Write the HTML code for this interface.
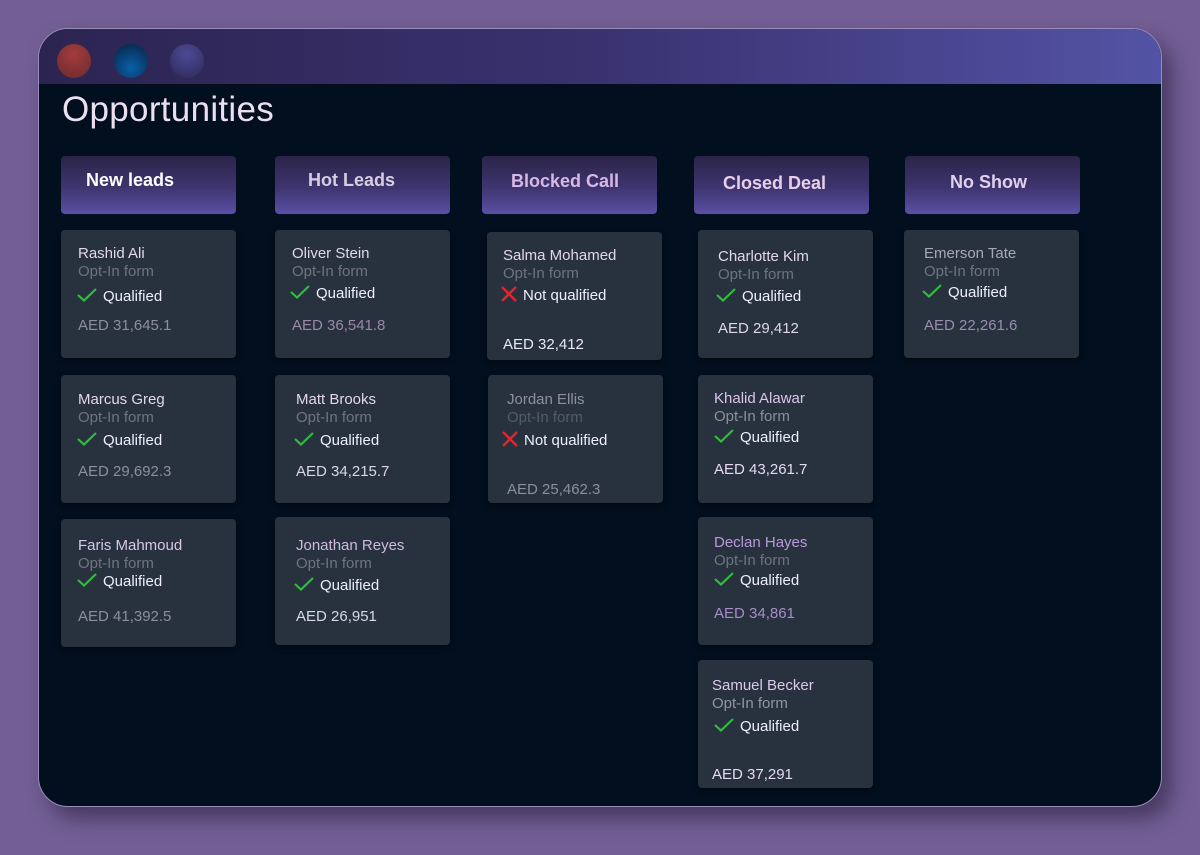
<!DOCTYPE html>
<html><head><style>
*{margin:0;padding:0;box-sizing:border-box}
body{width:1200px;height:855px;background:#735f95;font-family:"Liberation Sans",sans-serif;position:relative;overflow:hidden}
.win{position:absolute;left:38px;top:28px;width:1124px;height:779px;border-radius:30px;background:#020f1e;overflow:hidden;border:1px solid #9a8cb8;box-shadow:10px 12px 20px rgba(30,20,50,.5)}
.bar{position:absolute;left:0;top:0;width:100%;height:55px;background:linear-gradient(90deg,#2c2450,#3a3270 50%,#5353a5)}
.dot{position:absolute;top:15px;width:34px;height:34px;border-radius:50%}
h1{position:absolute;left:62px;top:90px;font-weight:400;font-size:35px;color:#ecdff0;letter-spacing:.3px}
.hd{position:absolute;top:156px;width:175px;height:58px;border-radius:4px;background:linear-gradient(180deg,#2b2448 0%,#3e3570 55%,#5b4fa5 100%);color:#e6cfe8;font-weight:700;font-size:18px}
.hd span{position:absolute;top:14px}
.c{position:absolute;width:175px;height:128px;border-radius:4px;background:#28323f;box-shadow:0 2px 6px rgba(0,0,0,.5);font-size:15px}
.c div{position:absolute;white-space:nowrap}
.n{color:#e2d6ea}.f{color:#6e7380}.q{color:#eef}.a{color:#8c8f99}
.ck{display:inline-block;width:20px;height:14px;vertical-align:-1px;margin-right:6px}
</style></head><body>
<div class="win">
<div class="bar"></div>
<div class="dot" style="left:18px;background:radial-gradient(circle at 50% 30%,#a33c3c,#6a2a30)"></div>
<div class="dot" style="left:75px;background:radial-gradient(circle at 50% 70%,#0a5fa8,#06213f)"></div>
<div class="dot" style="left:131px;background:radial-gradient(circle at 50% 30%,#4e4a98,#2b2955)"></div>
</div>
<h1>Opportunities</h1>
<div class="hd" style="left:61px"><span style="left:25px;color:#fff">New leads</span></div>
<div class="hd" style="left:275px"><span style="left:33px;color:#d9cde0">Hot Leads</span></div>
<div class="hd" style="left:482px"><span style="left:29px;top:15px;color:#d9b8e4">Blocked Call</span></div>
<div class="hd" style="left:694px"><span style="left:29px;top:17px;color:#e8cfe8">Closed Deal</span></div>
<div class="hd" style="left:905px"><span style="left:45px;top:16px;color:#e0d0ec">No Show</span></div>

<svg width="0" height="0" style="position:absolute"><defs>
<symbol id="ok" viewBox="0 0 20 14"><path d="M1 7 L7 12.5 L19 1" fill="none" stroke="#2fbd3a" stroke-width="2.2"/></symbol>
<symbol id="no" viewBox="0 0 16 16"><path d="M1 1L15 15M15 1L1 15" fill="none" stroke="#e0262d" stroke-width="2.4"/></symbol>
</defs></svg>

<!-- col1 -->
<div class="c" style="left:61px;top:230px"><div class="n" style="left:17px;top:15px">Rashid Ali</div><div class="f" style="left:17px;top:33px">Opt-In form</div><div class="q" style="left:16px;top:58px"><svg class="ck"><use href="#ok"/></svg>Qualified</div><div class="a" style="left:17px;top:87px">AED 31,645.1</div></div>
<div class="c" style="left:61px;top:375px"><div class="n" style="left:17px;top:16px">Marcus Greg</div><div class="f" style="left:17px;top:34px">Opt-In form</div><div class="q" style="left:16px;top:57px"><svg class="ck"><use href="#ok"/></svg>Qualified</div><div class="a" style="left:17px;top:88px">AED 29,692.3</div></div>
<div class="c" style="left:61px;top:519px"><div class="n" style="left:17px;top:18px;color:#d9c7e6">Faris Mahmoud</div><div class="f" style="left:17px;top:36px">Opt-In form</div><div class="q" style="left:16px;top:54px"><svg class="ck"><use href="#ok"/></svg>Qualified</div><div class="a" style="left:17px;top:89px">AED 41,392.5</div></div>
<!-- col2 -->
<div class="c" style="left:275px;top:230px"><div class="n" style="left:17px;top:15px">Oliver Stein</div><div class="f" style="left:17px;top:33px">Opt-In form</div><div class="q" style="left:15px;top:55px"><svg class="ck"><use href="#ok"/></svg>Qualified</div><div class="a" style="left:17px;top:87px;color:#9a88a8">AED 36,541.8</div></div>
<div class="c" style="left:275px;top:375px"><div class="n" style="left:21px;top:16px">Matt Brooks</div><div class="f" style="left:21px;top:34px">Opt-In form</div><div class="q" style="left:19px;top:57px"><svg class="ck"><use href="#ok"/></svg>Qualified</div><div class="a" style="left:21px;top:88px;color:#d8d8e4">AED 34,215.7</div></div>
<div class="c" style="left:275px;top:517px"><div class="n" style="left:21px;top:20px;color:#cdb8e0">Jonathan Reyes</div><div class="f" style="left:21px;top:38px">Opt-In form</div><div class="q" style="left:19px;top:60px"><svg class="ck"><use href="#ok"/></svg>Qualified</div><div class="a" style="left:21px;top:91px;color:#d8d8e4">AED 26,951</div></div>
<!-- col3 -->
<div class="c" style="left:487px;top:232px"><div class="n" style="left:16px;top:15px">Salma Mohamed</div><div class="f" style="left:16px;top:33px">Opt-In form</div><div class="q" style="left:14px;top:54px"><svg class="ck" style="width:16px;height:16px;margin-right:6px;vertical-align:-2px"><use href="#no"/></svg>Not qualified</div><div class="a" style="left:16px;top:104px;color:#e8e8f0">AED 32,412</div></div>
<div class="c" style="left:488px;top:375px"><div class="n" style="left:19px;top:16px;color:#8f8f9c">Jordan Ellis</div><div class="f" style="left:19px;top:34px;color:#555a68">Opt-In form</div><div class="q" style="left:14px;top:56px"><svg class="ck" style="width:16px;height:16px;margin-right:6px;vertical-align:-2px"><use href="#no"/></svg>Not qualified</div><div class="a" style="left:19px;top:106px">AED 25,462.3</div></div>
<!-- col4 -->
<div class="c" style="left:698px;top:230px"><div class="n" style="left:20px;top:18px">Charlotte Kim</div><div class="f" style="left:20px;top:36px">Opt-In form</div><div class="q" style="left:18px;top:58px"><svg class="ck"><use href="#ok"/></svg>Qualified</div><div class="a" style="left:20px;top:90px;color:#e0d4ea">AED 29,412</div></div>
<div class="c" style="left:698px;top:375px"><div class="n" style="left:16px;top:15px;color:#dcc4ea">Khalid Alawar</div><div class="f" style="left:16px;top:33px;color:#8a8f9c">Opt-In form</div><div class="q" style="left:16px;top:54px"><svg class="ck"><use href="#ok"/></svg>Qualified</div><div class="a" style="left:16px;top:86px;color:#e6d8f0">AED 43,261.7</div></div>
<div class="c" style="left:698px;top:517px"><div class="n" style="left:16px;top:17px;color:#b89ad8">Declan Hayes</div><div class="f" style="left:16px;top:35px">Opt-In form</div><div class="q" style="left:16px;top:55px"><svg class="ck"><use href="#ok"/></svg>Qualified</div><div class="a" style="left:16px;top:88px;color:#a88cc8">AED 34,861</div></div>
<div class="c" style="left:698px;top:660px"><div class="n" style="left:14px;top:17px;color:#dcc8ec">Samuel Becker</div><div class="f" style="left:14px;top:35px;color:#9095a0">Opt-In form</div><div class="q" style="left:16px;top:58px"><svg class="ck"><use href="#ok"/></svg>Qualified</div><div class="a" style="left:14px;top:106px;color:#e6d8f0">AED 37,291</div></div>
<!-- col5 -->
<div class="c" style="left:904px;top:230px"><div class="n" style="left:20px;top:15px;color:#a8a8b4">Emerson Tate</div><div class="f" style="left:20px;top:33px">Opt-In form</div><div class="q" style="left:18px;top:54px"><svg class="ck"><use href="#ok"/></svg>Qualified</div><div class="a" style="left:20px;top:87px;color:#9a8cb0">AED 22,261.6</div></div>
</body></html>
